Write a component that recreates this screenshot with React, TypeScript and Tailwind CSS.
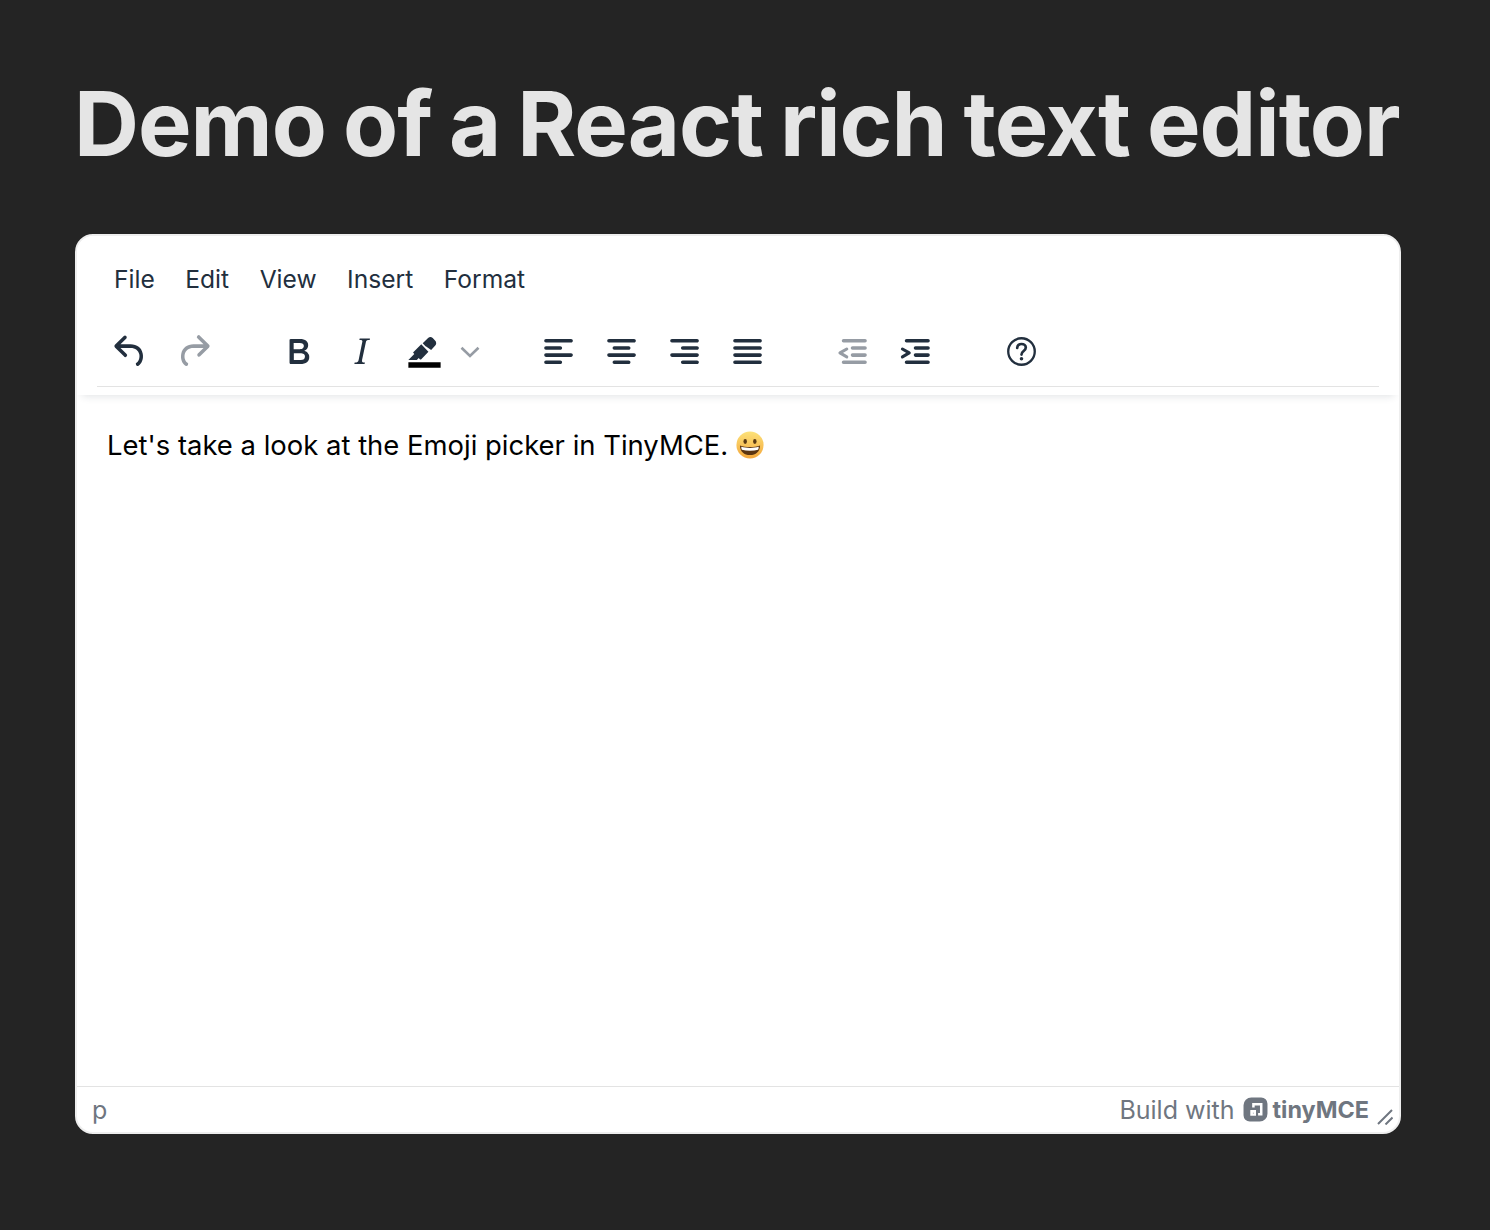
const F = "[font-family:Inter,'Liberation_Sans',sans-serif]";

const BARS = "M7 5h12a1 1 0 0 1 0 2H7a1 1 0 1 1 0-2Zm5 4h7a1 1 0 0 1 0 2h-7a1 1 0 0 1 0-2Zm0 4h7a1 1 0 0 1 0 2h-7a1 1 0 0 1 0-2Zm-5 4h12a1 1 0 0 1 0 2H7a1 1 0 0 1 0-2Z";

const paths = {
  undo: "M6.4 8H12c3.7 0 6.2 2 6.8 5.1.6 2.7-.4 5.6-2.3 6.8a1 1 0 0 1-1-1.8c1.1-.6 1.8-2.7 1.4-4.6-.5-2.1-2.1-3.5-4.9-3.5H6.4l3.3 3.3a1 1 0 1 1-1.4 1.4l-5-5a1 1 0 0 1 0-1.4l5-5a1 1 0 0 1 1.4 1.4L6.4 8Z",
  redo: "M17.6 10H12c-2.8 0-4.4 1.4-4.9 3.5-.4 2 .3 4 1.4 4.6a1 1 0 1 1-1 1.8c-2-1.2-2.9-4.1-2.3-6.8.6-3 3.2-5.1 6.8-5.1h5.6l-3.3-3.3a1 1 0 1 1 1.4-1.4l5 5a1 1 0 0 1 0 1.4l-5 5a1 1 0 0 1-1.4-1.4l3.3-3.3Z",
  bold: "M7.8 19c-.3 0-.5 0-.6-.2l-.2-.5V5.7c0-.2 0-.4.2-.5l.6-.2h5c1.5 0 2.7.3 3.5 1 .7.6 1.1 1.4 1.1 2.5a3 3 0 0 1-.6 1.9c-.4.6-1 1-1.6 1.2.4.1.9.3 1.3.6s.8.7 1 1.2c.4.4.5 1 .5 1.6 0 1.3-.4 2.3-1.3 3-.8.7-2.1 1-3.8 1H7.8Zm5-8.3c.6 0 1.2-.1 1.6-.5.4-.3.6-.7.6-1.3 0-1.1-.8-1.7-2.3-1.7H9.3v3.5h3.4Zm.5 6c.7 0 1.3-.1 1.7-.4.4-.4.6-.9.6-1.5s-.2-1-.7-1.4c-.4-.3-1-.4-2-.4H9.4v3.8h4Z",
  italic: "M16.7 4.7l-.1.9h-.3c-.6 0-1 0-1.4.3-.3.3-.4.6-.5 1.1l-2.1 9.8v.6c0 .5.4.8 1.4.8h.2l-.2.8H8l.2-.8h.2c1.1 0 1.8-.5 2-1.5l2-9.8.1-.5c0-.6-.4-.8-1.4-.8h-.3l.2-.9h5.8Z",
  alignLeft: "M5 5h14c.6 0 1 .4 1 1s-.4 1-1 1H5a1 1 0 1 1 0-2Zm0 4h8c.6 0 1 .4 1 1s-.4 1-1 1H5a1 1 0 1 1 0-2Zm0 8h8c.6 0 1 .4 1 1s-.4 1-1 1H5a1 1 0 0 1 0-2Zm0-4h14c.6 0 1 .4 1 1s-.4 1-1 1H5a1 1 0 0 1 0-2Z",
  alignCenter: "M5 5h14c.6 0 1 .4 1 1s-.4 1-1 1H5a1 1 0 1 1 0-2Zm3 4h8c.6 0 1 .4 1 1s-.4 1-1 1H8a1 1 0 1 1 0-2Zm0 8h8c.6 0 1 .4 1 1s-.4 1-1 1H8a1 1 0 0 1 0-2Zm-3-4h14c.6 0 1 .4 1 1s-.4 1-1 1H5a1 1 0 0 1 0-2Z",
  alignRight: "M5 5h14c.6 0 1 .4 1 1s-.4 1-1 1H5a1 1 0 1 1 0-2Zm6 4h8c.6 0 1 .4 1 1s-.4 1-1 1h-8a1 1 0 0 1 0-2Zm0 8h8c.6 0 1 .4 1 1s-.4 1-1 1h-8a1 1 0 0 1 0-2Zm-6-4h14c.6 0 1 .4 1 1s-.4 1-1 1H5a1 1 0 0 1 0-2Z",
  justify: "M5 5h14c.6 0 1 .4 1 1s-.4 1-1 1H5a1 1 0 1 1 0-2Zm0 4h14c.6 0 1 .4 1 1s-.4 1-1 1H5a1 1 0 1 1 0-2Zm0 4h14c.6 0 1 .4 1 1s-.4 1-1 1H5a1 1 0 0 1 0-2Zm0 4h14c.6 0 1 .4 1 1s-.4 1-1 1H5a1 1 0 0 1 0-2Z",
};

function Icon({ d, off }: { d: string; off?: boolean }) {
  return (
    <svg viewBox="0 0 24 24" className={`w-[43px] h-[43px] shrink-0 ${off ? "fill-[#969ca4]" : "fill-[#222f3e]"}`}>
      <path d={d} />
    </svg>
  );
}

function IndentIcon({ out }: { out?: boolean }) {
  return (
    <svg viewBox="0 0 24 24" className={`w-[43px] h-[43px] shrink-0 ${out ? "fill-[#969ca4] stroke-[#969ca4]" : "fill-[#222f3e] stroke-[#222f3e]"}`}>
      <path d={BARS} stroke="none" />
      <path
        d={out ? "M8.800 10.600 5 12.800l3.800 2.200" : "M4.700 10.600 8.500 12.800l-3.800 2.200"}
        fill="none"
        strokeWidth="1.700"
        strokeLinecap="round"
        strokeLinejoin="round"
      />
    </svg>
  );
}

function Highlight() {
  return (
    <div className="flex items-center w-[72px]">
      <svg viewBox="0 0 24 24" className="w-[43px] h-[43px] shrink-0 fill-[#222f3e]">
        <path fill="#000" d="M3 18h18v3H3z" />
        <path d="M7.700 16.700H3l3.300-3.300-.7-.8L10.200 8l4 4.100-4 4.200c-.2.200-.6.200-.8 0l-.6-.7-1.100 1.100zm5-7.500L11 7.400l3-2.900a2 2 0 0 1 2.600 0L18 6c.7.700.7 2 0 2.700l-2.300 2.400-3-2Z" />
      </svg>
      <svg viewBox="0 0 20 12" className="w-[20px] h-[12px] ml-[14px] shrink-0 fill-none stroke-[#969ca4] stroke-[2.6] mt-[1px]">
        <path d="M1.500 1.800 10 10l8.500-8.200" />
      </svg>
    </div>
  );
}

function Help() {
  return (
    <svg viewBox="0 0 24 24" className="w-[43px] h-[43px] shrink-0 fill-none stroke-[#222f3e] ml-[1px]">
      <circle cx="12" cy="12" r="7.400" strokeWidth="1.300" />
      <path d="M9.600 10c.1-1.400 1.100-2.200 2.400-2.200 1.400 0 2.400.9 2.400 2 0 2-2.400 1.900-2.400 3.900" strokeWidth="1.500" strokeLinecap="round" />
      <circle cx="12" cy="16" r="1" className="fill-[#222f3e] stroke-none" />
    </svg>
  );
}

function Emoji() {
  return (
    <svg viewBox="0 0 32 32" className="w-[28px] h-[28px] shrink-0 ml-[8px]">
      <defs>
        <linearGradient id="face" x1="0" y1="0" x2="0" y2="1">
          <stop offset="0" stopColor="#fde27a" />
          <stop offset="1" stopColor="#f3a63a" />
        </linearGradient>
      </defs>
      <circle cx="16" cy="16" r="15.500" fill="url(#face)" />
      <ellipse cx="10.500" cy="12" rx="2" ry="2.800" fill="#5a3a12" />
      <ellipse cx="21.500" cy="12" rx="2" ry="2.800" fill="#5a3a12" />
      <path d="M4.500 16.500c3.500 1.300 7.300 1.800 11.500 1.800s8-.5 11.500-1.800c0 6.800-4.800 11-11.500 11s-11.500-4.200-11.500-11Z" fill="#5a3410" />
      <path d="M6 18c3 .9 6.400 1.300 10 1.300s7-.4 10-1.300c0 1.400-.2 2.500-.7 3.500-2.800.7-5.900 1-9.300 1s-6.500-.3-9.300-1c-.5-1-.7-2.100-.7-3.500Z" fill="#fff" />
    </svg>
  );
}

function TinyLogo() {
  return (
    <svg viewBox="0 0 24 24" className="w-[25px] h-[25px] shrink-0">
      <path d="M8 0.500h9.500A6 6 0 0 1 23.500 6.500V16a7.500 7.500 0 0 1-7.500 7.500H6.500a6 6 0 0 1-6-6V8A7.500 7.500 0 0 1 8 0.500Z" fill="#6f7680" />
      <path d="M10 10V7h7.500v9.500h-3" fill="none" stroke="#fff" strokeWidth="2.400" />
      <path d="M7 12.500h5.500V18H7Z" fill="#fff" />
      <path d="M9.500 15h.8v.8h-.8Z" fill="#6f7680" />
    </svg>
  );
}

export default function App() {
  return (
    <div className={`min-h-[1230px] bg-[#242424] pl-[75px] pr-[89px] pt-[74px] ${F}`}>
      <h1 className="-ml-[1px] text-[90px] leading-[100px] font-bold tracking-[-1px] [word-spacing:-3.300px] text-[#e5e5e5] whitespace-nowrap">
        Demo of a React rich text editor
      </h1>
      <div className="mt-[60px] h-[900px] rounded-[18px] border-[2px] border-[#eeeeee] bg-white flex flex-col overflow-hidden">
        <div className="relative z-10 h-[159px] shrink-0 bg-white shadow-[0_6px_8px_-5px_rgba(34,47,62,0.14)] flex flex-col">
          <div className="h-[88px] pl-[37px] pb-[2px] flex items-center gap-[30.500px] text-[24.600px] text-[#222f3e] shrink-0">
            <span>File</span>
            <span>Edit</span>
            <span>View</span>
            <span>Insert</span>
            <span>Format</span>
          </div>
          <div className="mx-[20px] h-[63px] border-b border-[#e3e3e3] pl-[12px] pb-[7px] flex items-center gap-[62px]">
            <div className="flex items-center gap-[20px]">
              <Icon d={paths.undo} />
              <Icon d={paths.redo} off />
            </div>
            <div className="flex items-center gap-[20px]">
              <Icon d={paths.bold} />
              <Icon d={paths.italic} />
              <Highlight />
            </div>
            <div className="flex items-center gap-[20px]">
              <Icon d={paths.alignLeft} />
              <Icon d={paths.alignCenter} />
              <Icon d={paths.alignRight} />
              <Icon d={paths.justify} />
            </div>
            <div className="flex items-center gap-[20px]">
              <IndentIcon out />
              <IndentIcon />
            </div>
            <Help />
          </div>
        </div>
        <div className="flex-1 pl-[30px] pt-[30px] text-[27.450px] leading-[40px] text-black">
          <div className="flex items-center">
            <span>Let's take a look at the Emoji picker in TinyMCE.</span>
            <Emoji />
          </div>
        </div>
        <div className="h-[46px] shrink-0 border-t border-[#e3e3e3] flex items-center justify-between pl-[15px] pr-[6px] pt-[2px] text-[25px] text-[#6f7680]">
          <span>p</span>
          <div className="flex items-center">
            <span>Build with</span>
            <span className="ml-[9px] mb-[2px]"><TinyLogo /></span>
            <span className="ml-[4px] mb-[2px] font-bold text-[23.400px]">tinyMCE</span>
            <svg viewBox="0 0 16 16" className="w-[16px] h-[16px] ml-[8px] mt-[12px] stroke-[#6f7680] stroke-2 fill-none">
              <path d="M1 15 15 1M8.500 15.500l7-7" />
            </svg>
          </div>
        </div>
      </div>
    </div>
  );
}
